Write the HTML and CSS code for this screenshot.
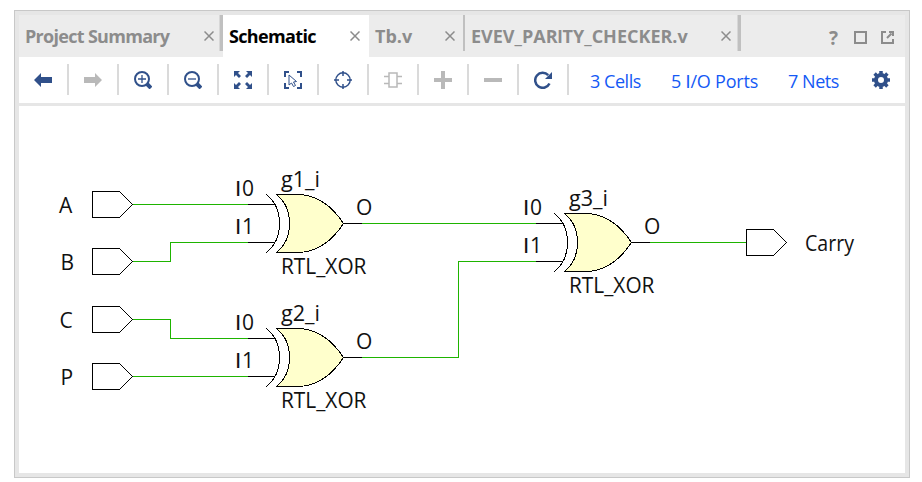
FILE: index.html
```html
<!DOCTYPE html>
<html lang="en">
<head>
<meta charset="utf-8">
<title>Schematic</title>
<link rel="stylesheet" href="styles.css">
</head>
<body>
<main class="window">
  <header class="tabs">
    <div class="tab summary"><span class="label">Project Summary</span><svg class="close" viewBox="0 0 10 10"><path d="M.5.5l9 9M9.5.5l-9 9"/></svg><i class="edge wide"></i></div>
    <div class="tab active"><span class="label">Schematic</span><svg class="close" viewBox="0 0 10 10"><path d="M.5.5l9 9M9.5.5l-9 9"/></svg></div>
    <div class="tab tb"><span class="label">Tb.v</span><svg class="close" viewBox="0 0 10 10"><path d="M.5.5l9 9M9.5.5l-9 9"/></svg><i class="edge"></i></div>
    <div class="tab checker"><span class="label">EVEV_PAR<span class="bar">I</span>TY_CHECKER.v</span><svg class="close" viewBox="0 0 10 10"><path d="M.5.5l9 9M9.5.5l-9 9"/></svg><i class="edge wide"></i></div>
    <div class="controls">
      <span class="help">?</span>
      <svg class="maximize" viewBox="0 0 13 13"><path d="M1 1h11v11H1z"/></svg>
      <svg class="popout" viewBox="0 0 13 13"><path d="M5 1H1v11h11V8M6 7l4.500-4.500M8 1h4v4"/></svg>
    </div>
  </header>
  <nav class="toolbar">
    <button><svg viewBox="0 0 18 18"><path class="fill" d="M0 9l7-7v4h11v6H7v4z"/></svg></button>
    <button class="off"><svg viewBox="0 0 18 18"><path class="fill" d="M18 9l-7-7v4H0v6h11v4z"/></svg></button>
    <button><svg viewBox="0 0 18 18"><circle cx="8" cy="8" r="7" stroke-width="2"/><path d="M4 8h8M8 4v8" stroke-width="1.300"/><path d="M13 13l4 4" stroke-width="4"/></svg></button>
    <button><svg viewBox="0 0 18 18"><circle cx="8" cy="8" r="7" stroke-width="2"/><path d="M4 8h8" stroke-width="1.300"/><path d="M13 13l4 4" stroke-width="4"/></svg></button>
    <button><svg viewBox="0 0 18 18"><path class="fill" d="M0 0h6L4 2l3 3-2 2-3-3-2 2zM18 0v6l-2-2-3 3-2-2 3-3-2-2zM0 18v-6l2 2 3-3 2 2-3 3 2 2zM18 18h-6l2-2-3-3 2-2 3 3 2-2z"/></svg></button>
    <button><svg viewBox="0 0 18 18"><path d="M1 6V1h4M13 1h4v5M17 12v5h-4M5 17H1v-5" stroke-width="2"/><path d="M5 4v10l2.500-2 2 3.500 2-1-2-3.500 3-.5z" stroke-width="1"/></svg></button>
    <button><svg viewBox="0 0 18 18"><circle cx="9" cy="9" r="7.200" stroke-width="1.400"/><path d="M9 0v5M9 13v5M0 9h5M13 9h5" stroke-width="1.500"/></svg></button>
    <button class="off"><svg viewBox="0 0 18 18"><path d="M5 2h8v14H5zM0 5.500h5M0 12.500h5M13 5.500h5M13 12.500h5" stroke-width="1.500"/></svg></button>
    <button class="off"><svg viewBox="0 0 18 18"><path d="M9 0v18M0 9h18" stroke-width="4"/></svg></button>
    <button class="off"><svg viewBox="0 0 18 18"><path d="M0 9h18" stroke-width="4"/></svg></button>
    <button><svg viewBox="0 0 18 18"><path d="M14.200 4.200A7.500 7.500 0 1 0 15.500 12.500" stroke-width="2.500"/><path class="fill" d="M18 1v7h-7z"/></svg></button>
    <div class="links">
      <a class="cells">3 Cells</a><a class="ports">5 <span class="bar">I</span>/O Ports</a><a class="nets">7 Nets</a>
    </div>
    <svg class="gear" viewBox="0 0 18 18"><circle cx="9" cy="9" r="5" stroke-width="4"/><path d="M9 0v3M9 15v3M0 9h3M15 9h3M2.600 2.600l2.100 2.100M13.300 13.300l2.100 2.100M2.600 15.400l2.100-2.100M13.300 4.700l2.100-2.100" stroke-width="3.500"/></svg>
  </nav>
  <svg class="canvas" viewBox="19 106 886 367">
    <defs>
      <path id="port" d="M.5-12.500h27l13 13-13 13h-27z"/>
      <g id="gate">
        <path class="body" d="M276.500 194.500H299.500Q325.500 196 343.500 223.500Q325.500 251 299.500 252.500H276.500Q289.500 242 289.500 223.500T276.500 194.500Z"/>
        <path class="line" d="M266.500 194.500Q279.500 205 279.500 223.500T266.500 252.500M248 204.500H275M248 242.500H275M343.500 223.500H362"/>
      </g>
    </defs>
    <g class="wire">
      <path d="M132 204.500H248M132 261.500H170.500V242.500H248M132 319.500H170.500V338.500H248M132 376.500H248M362 223.500H536M362 357.500H458.500V261.500H536M650 242.500H746"/>
    </g>
    <g class="line">
      <use href="#port" x="92" y="204"/><use href="#port" x="92" y="261"/><use href="#port" x="92" y="319"/><use href="#port" x="92" y="376"/><use href="#port" x="746" y="242"/>
    </g>
    <use href="#gate"/><use href="#gate" y="134"/><use href="#gate" x="288" y="19"/>
    <g class="text">
      <text x="59" y="212.500">A</text><text x="60.500" y="269.500">B</text><text x="59.500" y="327.500">C</text><text x="60.500" y="384.500">P</text>
      <text x="805" y="250.500" textLength="49" lengthAdjust="spacingAndGlyphs">Carry</text>
      <text x="235" y="196"><tspan class="bar">I</tspan><tspan x="242">0</tspan></text><text x="235" y="234"><tspan class="bar">I</tspan><tspan x="242">1</tspan></text>
      <text x="281" y="187" textLength="39" lengthAdjust="spacingAndGlyphs">g1_i</text><text x="281" y="273.500" textLength="85.500" lengthAdjust="spacingAndGlyphs">RTL_XOR</text><text x="356" y="215">O</text>
      <text x="235" y="330"><tspan class="bar">I</tspan><tspan x="242">0</tspan></text><text x="235" y="368"><tspan class="bar">I</tspan><tspan x="242">1</tspan></text>
      <text x="281" y="320.500" textLength="39" lengthAdjust="spacingAndGlyphs">g2_i</text><text x="281" y="407.500" textLength="85.500" lengthAdjust="spacingAndGlyphs">RTL_XOR</text><text x="356" y="349">O</text>
      <text x="523" y="215"><tspan class="bar">I</tspan><tspan x="530">0</tspan></text><text x="523" y="253"><tspan class="bar">I</tspan><tspan x="530">1</tspan></text>
      <text x="569" y="205.500" textLength="39" lengthAdjust="spacingAndGlyphs">g3_i</text><text x="569" y="292.500" textLength="85.500" lengthAdjust="spacingAndGlyphs">RTL_XOR</text><text x="644" y="234">O</text>
    </g>
  </svg>
</main>
</body>
</html>
```
FILE: styles.css
```css
* { box-sizing: border-box; }
body { margin: 0; padding: 10px 0 0 14px; background: #fff; font-family: "Open Sans", "Noto Sans", sans-serif; overflow: hidden; }
svg { display: block; fill: none; stroke: currentColor; }
.window { width: 896px; height: 468px; border: 1px solid #c8c8c8; background: #fff; padding: 4px; outline: 4px solid #e6e6e6; outline-offset: -5px; }
.tabs { display: flex; height: 42px; background: #ececec; color: #8c8c8c; }
.tab { display: flex; align-items: center; height: 42px; font-size: 18px; font-weight: 700; white-space: nowrap; padding-left: 6px; }
.label { line-height: 42px; }
/* plain stroke capital I, without crossbars */
.bar { font-family: "Liberation Sans", sans-serif; }
.close { width: 10px; height: 10px; margin-left: auto; stroke-width: 1.5; }
.edge { align-self: flex-start; width: 2px; height: 36px; background: #c0c0c0; margin-left: 8px; }
.edge.wide { width: 4px; margin-left: 5px; border-left: 1px solid #d7d7d7; }
.summary { width: 204px; }
.summary .label { letter-spacing: -.7px; }
.active { width: 146px; background: #fff; color: #000; padding-right: 9px; }
.active .label { letter-spacing: -.65px; }
.active .close { color: #8c8c8c; }
.tb { width: 96px; }
.checker { width: 276px; }
.checker .edge { margin-left: 6px; }
.controls { margin-left: auto; display: flex; align-items: center; gap: 14px; padding: 3px 11px 0 0; }
.controls svg { width: 13px; height: 13px; stroke-width: 2; }
.help { font-size: 19px; line-height: 20px; font-weight: 700; margin-right: 2px; }
.toolbar { display: flex; height: 49px; align-items: center; background: #fff; border-bottom: 3px solid #e6e6e6; padding-bottom: 1px; }
.toolbar button { width: 50px; height: 31px; padding: 0 0 0 15px; margin: 0; border: 0; border-right: 2px solid #dadada; background: none; color: #30508a; }
.toolbar button svg, .gear { width: 18px; height: 18px; }
.toolbar .off { color: #b9b9b9; }
.fill { fill: currentColor; stroke: none; }
.links { display: flex; width: 290px; color: #1459f5; font-size: 18px; line-height: 24px; padding: 3px 0 0 21px; white-space: nowrap; letter-spacing: -.45px; }
.cells { width: 81px; }
.ports { width: 117px; letter-spacing: -.2px; }
.gear { margin-left: auto; margin-right: 15px; color: #30508a; }
.canvas { width: 886px; height: 367px; }
.wire { stroke: #1eb400; shape-rendering: crispEdges; }
.line { stroke: #000; shape-rendering: crispEdges; }
.body { fill: #ffffcc; stroke: #000; shape-rendering: crispEdges; }
.text { fill: #111; stroke: none; font-size: 21px; }
.text .bar { font-size: 22.5px; }
```
